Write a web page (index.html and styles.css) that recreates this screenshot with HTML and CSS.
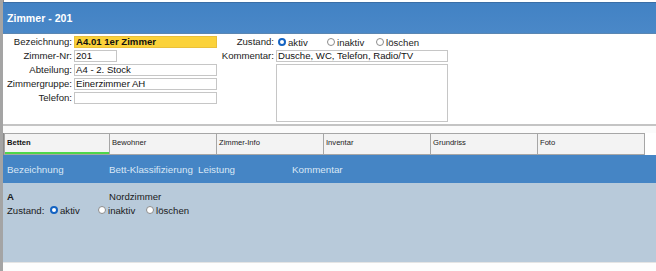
FILE: index.html
```html
<!DOCTYPE html>
<html lang="de">
<head>
<meta charset="utf-8">
<title>Zimmer - 201</title>
<link rel="stylesheet" href="styles.css">
</head>
<body>
<div class="app">
  <div class="title">Zimmer - 201</div>
  <div class="form">
    <div class="grid left">
      <span class="lbl">Bezeichnung:</span><div class="field wide yellow">A4.01 1er Zimmer</div>
      <span class="lbl">Zimmer-Nr:</span><div class="field short">201</div>
      <span class="lbl">Abteilung:</span><div class="field wide">A4 - 2. Stock</div>
      <span class="lbl">Zimmergruppe:</span><div class="field wide">Einerzimmer AH</div>
      <span class="lbl">Telefon:</span><div class="field wide"></div>
    </div>
    <div class="grid right">
      <span class="lbl">Zustand:</span>
      <div class="radios">
        <span class="opt"><span class="radio on"></span>aktiv</span>
        <span class="opt"><span class="radio"></span>inaktiv</span>
        <span class="opt"><span class="radio"></span>löschen</span>
      </div>
      <span class="lbl">Kommentar:</span><div class="field cwide">Dusche, WC, Telefon, Radio/TV</div>
      <span class="lbl"></span><div class="field area"></div>
    </div>
  </div>
  <div class="sep"></div>
  <div class="gap"></div>
  <div class="tabs">
    <div class="tab active">Betten</div>
    <div class="tab">Bewohner</div>
    <div class="tab">Zimmer-Info</div>
    <div class="tab">Inventar</div>
    <div class="tab">Grundriss</div>
    <div class="tab">Foto</div>
  </div>
  <div class="thead cols">
    <span>Bezeichnung</span>
    <span>Bett-Klassifizierung</span>
    <span>Leistung</span>
    <span>Kommentar</span>
  </div>
  <div class="tbody">
    <div class="cols row">
      <span class="bold">A</span>
      <span>Nordzimmer</span>
    </div>
    <div class="row zrow">
      <span class="zlbl">Zustand:</span>
      <span class="opt b"><span class="radio on"></span>aktiv</span>
      <span class="opt b"><span class="radio"></span>inaktiv</span>
      <span class="opt b"><span class="radio"></span>löschen</span>
    </div>
  </div>
  <div class="foot"></div>
</div>
</body>
</html>
```

FILE: styles.css
```css
* { box-sizing: border-box; }
html, body { margin: 0; padding: 0; background: #ffffff; }
body {
  font-family: "Liberation Sans", Arial, sans-serif;
  font-size: 9.6px;
  color: #1a1a1a;
  width: 656px;
  height: 271px;
  overflow: hidden;
}
.app {
  border-left: 3px solid #a4a4a4;
  padding-top: 2px;
  background: #ffffff;
  height: 271px;
  box-shadow: inset 1px 0 0 #8a8a8a;
}
.title {
  height: 32px;
  background: linear-gradient(#4282c4, #4a88c8);
  border-top: 1px solid #3a6ea6;
  border-bottom: 1px solid #5a86b2;
  color: #ffffff;
  font-weight: bold;
  font-size: 10.6px;
  padding-left: 4px;
  display: flex;
  align-items: center;
}
.form {
  height: 90px;
  padding-top: 1px;
  display: flex;
  background: #ffffff;
}
.grid {
  display: grid;
  grid-auto-rows: 14px;
  column-gap: 2px;
  align-items: center;
}
.left { grid-template-columns: 69px 143px; }
.right { grid-template-columns: 57px 172px; }
.lbl {
  text-align: right;
  color: #222;
  white-space: nowrap;
  line-height: 12px;
}
.field {
  height: 12px;
  border: 1px solid #c6c6c6;
  background: #fff;
  padding-left: 1px;
  line-height: 10px;
  color: #111;
  white-space: nowrap;
  overflow: hidden;
}
.short { width: 43px; }
.yellow {
  background: #fbd23a;
  border-color: #eac03a;
  font-weight: bold;
}
.area {
  height: 58px;
  align-self: start;
  margin-top: 1px;
}
.radios {
  display: flex;
  align-items: center;
  height: 12px;
  padding-left: 2px;
}
.opt {
  display: inline-flex;
  align-items: center;
  width: 49px;
  white-space: nowrap;
  color: #222;
}
.radio {
  display: inline-block;
  width: 8px;
  height: 8px;
  border-radius: 50%;
  border: 1px solid #8c8c8c;
  background: #fff;
  margin-right: 2px;
}
.radio.on {
  border: 2.5px solid #1463c2;
}
.sep {
  height: 2px;
  background: #c4c4c4;
}
.gap {
  height: 7px;
  background: #fbfbfb;
}
.tabs {
  display: grid;
  grid-template-columns: 105px repeat(5, 107px);
  margin-left: 1px;
  width: 641px;
  height: 22px;
  border: 1px solid #a6a6a6;
  border-right: none;
  background: #f3f3f3;
}
.tab {
  border-right: 1px solid #a6a6a6;
  font-size: 7.6px;
  padding: 4px 0 0 2px;
  line-height: 9px;
  color: #222;
}
.tab.active {
  font-weight: bold;
  color: #111;
  box-shadow: inset 0 -2px 0 #4fd64a;
}
.cols {
  display: grid;
  grid-template-columns: 102px 89px 94px 1fr;
  padding-left: 4px;
}
.thead {
  height: 28px;
  background: #4585c5;
  color: #d9e7f5;
  font-size: 9.8px;
  align-items: center;
}
.tbody {
  height: 79px;
  background: #b8cada;
  padding-top: 7px;
}
.row {
  height: 13px;
  line-height: 13px;
  color: #1a1a1a;
}
.bold { font-weight: bold; }
.zrow {
  display: flex;
  align-items: center;
  padding-left: 4px;
  height: 14px;
}
.zlbl { width: 43px; }
.opt.b { width: 48px; color: #1a1a1a; }
.foot {
  height: 9px;
  background: #fdfdfd;
  border-top: 1px solid #e4e4e4;
}
```
